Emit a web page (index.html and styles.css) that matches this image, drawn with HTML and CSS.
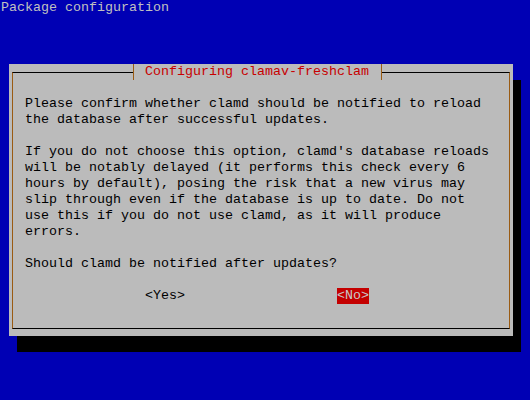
FILE: index.html
```html
<!DOCTYPE html>
<html>
<head>
<meta charset="utf-8">
<link rel="stylesheet" href="styles.css">
</head>
<body>
<div class="screen">
  <div class="header">Package configuration</div>
  <div class="dialog">
    <div class="frame">
      <p class="para">Please confirm whether clamd should be notified to reload
the database after successful updates.</p>
      <p class="para">If you do not choose this option, clamd's database reloads
will be notably delayed (it performs this check every 6
hours by default), posing the risk that a new virus may
slip through even if the database is up to date. Do not
use this if you do not use clamd, as it will produce
errors.</p>
      <p class="para">Should clamd be notified after updates?</p>
      <div class="buttons">
        <span class="btn">&lt;Yes&gt;</span>
        <span class="btn btn-active">&lt;No&gt;</span>
      </div>
    </div>
    <div class="title">
      <span class="tee tee-left"></span>
      <span class="title-text"> Configuring clamav-freshclam </span>
      <span class="tee tee-right"></span>
    </div>
  </div>
</div>
</body>
</html>
```
FILE: styles.css
```css
html, body {
  margin: 0;
  padding: 0;
  background: #0000b4;
}
body {
  width: 530px;
  height: 400px;
  overflow: hidden;
  font-family: "Liberation Mono", "DejaVu Sans Mono", monospace;
  font-size: 13.333px;
  line-height: 16px;
}
.screen {
  padding-left: 1px;
}
.header {
  color: #c0c0c0;
  height: 16px;
  white-space: pre;
}
.dialog {
  position: relative;
  margin-top: 48px;
  margin-left: 8px;
  width: 504px;
  height: 272px;
  box-sizing: border-box;
  background: #bbbbbb;
  box-shadow: 8px 16px 0 #000;
  padding: 8px 3px 0 3px;
}
.frame {
  box-sizing: border-box;
  height: 257px;
  border-top: 1px solid #000;
  border-bottom: 1px solid #000;
  border-left: 1px solid #9a5b13;
  border-right: 1px solid #9a5b13;
  padding: 23px 0 0 12px;
  color: #000;
}
.para {
  margin: 0 0 16px 0;
  white-space: pre;
}
.buttons {
  display: flex;
  gap: 152px;
  padding-left: 120px;
}
.btn {
  white-space: pre;
}
.btn-active {
  background: #c40000;
  color: #c8c8c8;
}
.title {
  position: absolute;
  top: 0;
  left: 120px;
  display: flex;
  height: 16px;
  background: #bbbbbb;
}
.title-text {
  color: #c80000;
  white-space: pre;
}
.tee {
  position: relative;
  width: 8px;
  height: 16px;
}
.tee::before {
  content: "";
  position: absolute;
  left: 4px;
  top: 0;
  width: 1px;
  height: 16px;
  background: #9a5b13;
}
.tee::after {
  content: "";
  position: absolute;
  top: 8px;
  height: 1px;
  width: 4px;
  background: #000;
}
.tee-left::after {
  left: 0;
}
.tee-right::after {
  left: 5px;
  width: 3px;
}
```
